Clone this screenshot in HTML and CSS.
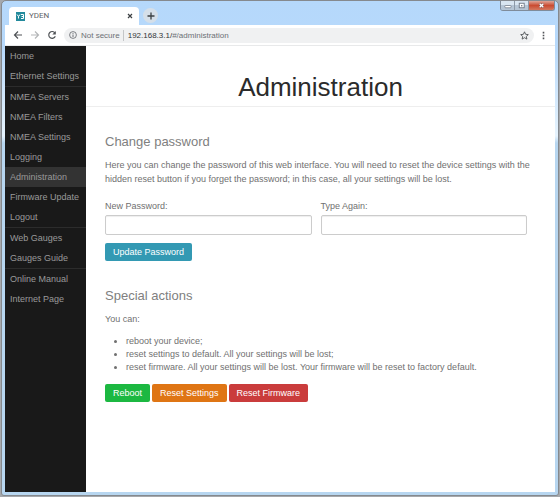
FILE: index.html
```html
<!DOCTYPE html>
<html lang="en">
<head>
<meta charset="utf-8">
<title>YDEN</title>
<link rel="stylesheet" href="styles.css">
</head>
<body>
<div class="window">
  <header class="titlebar">
    <div class="tab">
      <svg class="favicon" viewBox="0 0 9 9" aria-hidden="true"><rect width="9" height="9" fill="#238a9c"/><path d="M1 2.5l1.5 2v2M4 2.5l-1.500 2M5 2.500h2.500v4H5M5.500 4.500h2" fill="none" stroke="#fff" stroke-width="1"/></svg>
      <span class="tab-title">YDEN</span>
      <button class="icon-button" aria-label="Close tab"><svg class="cross" viewBox="0 0 6 6"><path d="M1 1l4 4M5 1L1 5" stroke="#3c4043" stroke-width="1.200"/></svg></button>
    </div>
    <button class="new-tab" aria-label="New tab"><svg class="plus" viewBox="0 0 8 8"><path d="M4 .5v7M.5 4h7" stroke="#3c4043" stroke-width="1.300"/></svg></button>
    <div class="controls">
      <button class="control" aria-label="Minimize"><svg viewBox="0 0 14 10"><rect x="4" y="5" width="7" height="2.500" rx="1" fill="#fff" stroke="#6d7784" stroke-width=".8"/></svg></button>
      <button class="control" aria-label="Maximize"><svg viewBox="0 0 14 10"><rect x="4.500" y="2.500" width="5.500" height="5" fill="#fff" stroke="#6d7784"/><rect x="6.500" y="4.500" width="1.500" height="1.500" fill="#6d7784"/></svg></button>
      <button class="control control-close" aria-label="Close"><svg viewBox="0 0 26 10"><path d="M11 3l4 4M15 3l-4 4" stroke="#7a4c4a" stroke-width="2.600"/><path d="M11 3l4 4M15 3l-4 4" stroke="#fff" stroke-width="1.500"/></svg></button>
    </div>
  </header>
  <div class="toolbar">
    <button class="icon-button" aria-label="Back"><svg class="nav-icon" viewBox="0 0 10 10"><path d="M9 5H1.500M5 1.500L1.500 5 5 8.500" fill="none" stroke="#505357" stroke-width="1.200"/></svg></button>
    <button class="icon-button" aria-label="Forward"><svg class="nav-icon" viewBox="0 0 10 10"><path d="M1 5h7.500M5 1.500L8.500 5 5 8.500" fill="none" stroke="#b4b6b8" stroke-width="1.200"/></svg></button>
    <button class="icon-button" aria-label="Reload"><svg class="nav-icon" viewBox="0 0 10 10"><path d="M8 3A3.400 3.400 0 1 0 8.300 6.200" fill="none" stroke="#505357" stroke-width="1.200"/><path d="M8.800 1v3.500H5.300z" fill="#505357"/></svg></button>
    <div class="address">
      <svg class="info" viewBox="0 0 8 8" aria-hidden="true"><circle cx="4" cy="4" r="3.400" fill="none" stroke="#5f6368" stroke-width=".8"/><path d="M4 3.500V6M4 2v.9" stroke="#5f6368" stroke-width=".9"/></svg>
      <span class="secure">Not secure</span>
      <span class="url">192.168.3.1/<span class="path">#/administration</span></span>
      <button class="icon-button" aria-label="Bookmark"><svg class="star" viewBox="0 0 9 9"><path d="M4.500.8l1.100 2.500 2.700.3-2 1.800.6 2.700-2.400-1.400-2.400 1.400.6-2.700-2-1.800 2.700-.3z" fill="none" stroke="#505357" stroke-width=".9"/></svg></button>
    </div>
    <button class="icon-button menu" aria-label="Menu"><svg class="dots" viewBox="0 0 3 9"><path d="M.7.800h1.600v1.600H.7zM.7 3.700h1.600v1.600H.7zM.7 6.600h1.600v1.600H.7z" fill="#505357"/></svg></button>
  </div>
  <div class="page">
    <nav class="sidebar">
      <a href="#/home">Home</a>
      <a href="#/ethernet">Ethernet Settings</a>
      <a class="divided" href="#/servers">NMEA Servers</a>
      <a href="#/filters">NMEA Filters</a>
      <a href="#/nmea">NMEA Settings</a>
      <a href="#/logging">Logging</a>
      <a class="selected" href="#/administration">Administration</a>
      <a href="#/firmware">Firmware Update</a>
      <a href="#/logout">Logout</a>
      <a class="divided" href="#/gauges">Web Gauges</a>
      <a href="#/guide">Gauges Guide</a>
      <a class="divided" href="#/manual">Online Manual</a>
      <a href="#/internet">Internet Page</a>
    </nav>
    <main class="main">
      <h1>Administration</h1>
      <section class="content">
        <h2>Change password</h2>
        <p>Here you can change the password of this web interface. You will need to reset the device settings with the hidden reset button if you forget the password; in this case, all your settings will be lost.</p>
        <form class="form">
          <div class="fields">
            <div class="field"><label for="new-password">New Password:</label><input id="new-password" type="password"></div>
            <div class="field"><label for="again">Type Again:</label><input id="again" type="password"></div>
          </div>
          <button class="button" type="button">Update Password</button>
        </form>
        <h2>Special actions</h2>
        <p>You can:</p>
        <ul>
          <li>reboot your device;</li>
          <li>reset settings to default. All your settings will be lost;</li>
          <li>reset firmware. All your settings will be lost. Your firmware will be reset to factory default.</li>
        </ul>
        <div class="actions">
          <button class="button button-success" type="button">Reboot</button>
          <button class="button button-warning" type="button">Reset Settings</button>
          <button class="button button-error" type="button">Reset Firmware</button>
        </div>
      </section>
    </main>
  </div>
</div>
</body>
</html>
```
FILE: styles.css
```css
* { box-sizing: border-box; }
body {
  margin: 0;
  background: #a5a8ac;
  color: #707070;
  font: 9px/14px "Liberation Sans", Arial, sans-serif;
}
button { padding: 0; border: 0; background: none; font: inherit; }
svg { display: block; }
.window {
  display: flex;
  flex-direction: column;
  min-height: calc(100vh - 1px);
  margin: 0 1px 1px;
  padding: 0 3px 3px;
  border: 1px solid #85898e;
  border-radius: 5px 5px 3px 3px;
  background: linear-gradient(#b5d8fb 0, #b7d9fb 45px, #e6f3fd 135px, #b7d6f0 142px, #b7d6f0 100%);
}
.titlebar { display: flex; align-items: flex-end; height: 24px; }
.tab {
  display: flex;
  align-items: center;
  width: 130px;
  height: 18px;
  margin-left: 4px;
  padding: 0 6px 0 7px;
  border-radius: 4px 4px 0 0;
  background: #fff;
}
.favicon { width: 9px; height: 9px; margin-right: 4px; }
.tab-title { flex: 1; color: #5f6368; font: 8px/14px Roboto, sans-serif; }
.cross { width: 6px; height: 6px; }
.new-tab {
  display: grid;
  place-items: center;
  width: 15px;
  height: 15px;
  margin: 0 0 2px 4px;
  border-radius: 50%;
  background: #d5dfe9;
}
.plus { width: 8px; height: 8px; }
.controls {
  display: flex;
  align-self: flex-start;
  height: 10px;
  margin-left: auto;
  border: 1px solid #7f8c9b;
  border-top: 0;
  border-radius: 0 0 3px 3px;
  overflow: hidden;
}
.control { width: 14px; border-right: 1px solid #8b98a6; background: linear-gradient(#d8e5f1 50%, #b5c5d5 50%); }
.control svg { width: 100%; height: 100%; }
.control-close { width: 25px; border: 0; background: linear-gradient(#dfa597, #ca4c32 50%, #d4785f); }
.toolbar {
  display: flex;
  align-items: center;
  gap: 7px;
  height: 21px;
  padding: 0 10px 0 8px;
  border-bottom: 1px solid #e8e9ea;
  background: #fff;
}
.nav-icon { width: 10px; height: 10px; }
.address {
  display: flex;
  flex: 1;
  align-items: center;
  height: 15px;
  padding: 0 5px;
  border-radius: 8px;
  background: #f0f1f2;
  font-size: 8px;
  line-height: 11px;
}
.info { width: 8px; height: 8px; margin-right: 4px; }
.secure { padding-right: 3px; border-right: 1px solid #c4c6c8; color: #6c7075; }
.url { flex: 1; padding-left: 4px; color: #333639; }
.path { color: #6c7075; }
.star { width: 9px; height: 9px; }
.menu { margin-left: 1px; }
.dots { width: 3px; height: 9px; }
.page { display: flex; flex: 1; background: #fff; }
.sidebar { width: 81px; background: #191919; }
.sidebar a {
  display: block;
  padding: 0 5px;
  color: #999;
  line-height: 20px;
  text-decoration: none;
  white-space: nowrap;
}
.sidebar .divided { border-top: 1px solid #2c2c2c; }
.sidebar .selected { background: #333; }
.main { flex: 1; min-width: 0; }
h1 {
  margin: 0;
  padding: 24px 0 2px;
  border-bottom: 1px solid #eee;
  color: #2b2b2b;
  font-size: 26px;
  font-weight: 400;
  line-height: 34px;
  text-align: center;
}
.content { padding: 26px 20px 20px 19px; }
h2 { margin: 0 0 7px; color: #808080; font-size: 13px; font-weight: 400; line-height: 18px; }
p { margin: 0 0 8px; }
.form { margin: 13px 0 26px; padding-right: 8px; }
.fields { display: flex; gap: 9px; margin-bottom: 8px; }
.field { flex: 1; min-width: 0; }
label { display: block; margin-bottom: 2px; }
input {
  display: block;
  width: 100%;
  height: 20px;
  padding: 2px 5px;
  border: 1px solid #ccc;
  border-radius: 2px;
  background: #fff;
  box-shadow: inset 0 1px 1px #eee;
  font: inherit;
}
ul { margin: 9px 0 10px; padding-left: 21px; line-height: 13px; }
.button {
  padding: 2px 8px;
  border-radius: 2px;
  background: #3399b3;
  color: #fff;
}
.actions { display: flex; gap: 2px; }
.button-success { background: #1cb841; }
.button-warning { background: #df7514; }
.button-error { background: #ca3c3c; }
```
